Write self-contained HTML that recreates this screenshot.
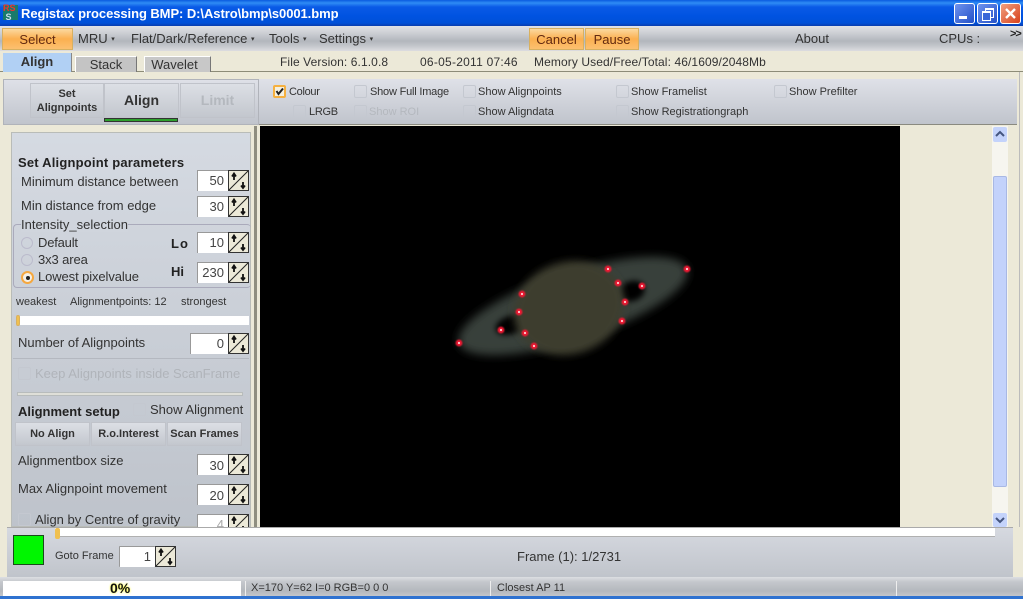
<!DOCTYPE html>
<html><head><meta charset="utf-8"><style>
html,body{margin:0;padding:0}
body{width:1023px;height:599px;position:relative;overflow:hidden;background:#ece9d8;font-family:"Liberation Sans",sans-serif;font-size:12px;color:#333}
.a,.t{position:absolute}
.t{white-space:nowrap;line-height:14px}
.b{font-weight:bold;color:#222}
.box{position:absolute;background:#fff;border-top:1px solid #999;border-left:1px solid #999;box-sizing:border-box;text-align:right;padding-right:4px;font-size:13px;line-height:20px;color:#444}
.sp{position:absolute;width:21px;height:21px;background:#ece9d8;border:1px solid #333;box-sizing:border-box}
.sp svg{position:absolute;left:0;top:0}
.cb{position:absolute;width:13px;height:13px;border:1px solid #c4c8d0;border-radius:2px;box-sizing:border-box;background:none}
.btn{position:absolute;background:linear-gradient(#dcdfe5,#c3c7ce);border:1px solid #c0c3ca;box-sizing:border-box;text-align:center;font-weight:bold;color:#333}
.or{position:absolute;background:linear-gradient(#fbd9a0,#fbb050 50%,#fcc070);border:1px solid #d8b060;box-sizing:border-box;text-align:center;font-size:13px;line-height:21px;color:#632a10}
.tab{position:absolute;box-sizing:border-box;text-align:center;font-size:13px}
.wb{position:absolute;top:3px;width:21px;height:21px;border:1px solid #fff;border-radius:3px;box-sizing:border-box}
</style></head><body>

<!-- title bar -->
<div class="a" style="left:0;top:0;width:1023px;height:26px;background:linear-gradient(#0a5be0 0,#2f8cf5 3px,#0a5ae6 7px,#0053e1 16px,#0050d8 23px,#0a3cae 26px)"></div>
<div class="a" style="left:3px;top:5px;width:15px;height:15px;background:#1a7a6a"></div>
<div class="t" style="left:3px;top:4px;font-size:9px;color:#e33;font-weight:bold;line-height:9px">R<span style="color:#e33">S</span><br><span style="color:#cde">&nbsp;S</span></div>
<div class="t" style="left:21px;top:6px;font-size:13px;font-weight:bold;color:#fff;letter-spacing:-.07px;line-height:15px">Registax processing BMP: D:\Astro\bmp\s0001.bmp</div>
<div class="wb" style="left:954px;background:linear-gradient(135deg,#6f93ee,#2350c8)"><div class="a" style="left:4px;top:12px;width:8px;height:3px;background:#fff"></div></div>
<div class="wb" style="left:977px;background:linear-gradient(135deg,#6f93ee,#2350c8)"><div class="a" style="left:7px;top:4px;width:7px;height:7px;border:1px solid #fff;border-top-width:2px"></div><div class="a" style="left:4px;top:7px;width:7px;height:7px;border:1px solid #fff;border-top-width:2px;background:#3a66d8"></div></div>
<div class="wb" style="left:1000px;background:linear-gradient(135deg,#f0a080,#d8401c)"><svg width="19" height="19" style="position:absolute;left:0;top:0"><path d="M5 5L14 14M14 5L5 14" stroke="#fff" stroke-width="2.400"/></svg></div>

<!-- menu bar -->
<div class="a" style="left:0;top:26px;width:1023px;height:25px;background:linear-gradient(#e2e2e6 0,#c9ccd1 8px,#b2b6bc 15px,#c4c7cc 20px,#dcdce0 25px)"></div>
<div class="or" style="left:2px;top:28px;width:71px;height:22px;line-height:22px">Select</div>
<div class="t" style="left:78px;top:32px;font-size:13px">MRU <span style="font-size:7px;vertical-align:2px">▾</span></div>
<div class="t" style="left:131px;top:32px;font-size:13px">Flat/Dark/Reference <span style="font-size:7px;vertical-align:2px">▾</span></div>
<div class="t" style="left:269px;top:32px;font-size:13px">Tools <span style="font-size:7px;vertical-align:2px">▾</span></div>
<div class="t" style="left:319px;top:32px;font-size:13px">Settings <span style="font-size:7px;vertical-align:2px">▾</span></div>
<div class="or" style="left:529px;top:28px;width:55px;height:22px">Cancel</div>
<div class="or" style="left:585px;top:28px;width:54px;height:22px">Pause</div>
<div class="t" style="left:795px;top:32px;font-size:13px">About</div>
<div class="t" style="left:939px;top:32px;font-size:13px">CPUs :</div>
<div class="t" style="left:1010px;top:27px;font-size:11px;font-weight:bold;color:#222;letter-spacing:-1px">&gt;&gt;</div>

<!-- tabs -->
<div class="a" style="left:0;top:71px;width:1023px;height:1px;background:#8d8c78"></div>
<div class="tab" style="left:3px;top:53px;width:69px;height:19px;background:#b1d0f4;font-weight:bold;line-height:18px;color:#333;border-right:1px solid #888">Align</div>
<div class="tab" style="left:75px;top:56px;width:62px;height:16px;background:#c4c4c4;line-height:16px;border:1px solid #fff;border-right:1px solid #777;border-bottom:0">Stack</div>
<div class="tab" style="left:144px;top:56px;width:67px;height:16px;background:#c8c8c8;line-height:16px;border:1px solid #fff;border-right:1px solid #777;border-bottom:0;padding-right:6px">Wavelet</div>
<div class="t" style="left:280px;top:55px;letter-spacing:.1px">File Version: 6.1.0.8</div>
<div class="t" style="left:420px;top:55px;letter-spacing:.25px">06-05-2011 07:46</div>
<div class="t" style="left:534px;top:55px;letter-spacing:.1px">Memory Used/Free/Total: 46/1609/2048Mb</div>

<!-- toolbar -->
<div class="a" style="left:3px;top:79px;width:1014px;height:46px;background:linear-gradient(#dfe1e8,#c0c4cc);border-bottom:1px solid #8a8a80;box-sizing:border-box"></div>
<div class="a" style="left:3px;top:79px;width:256px;height:46px;border:1px solid #b0b3ba;box-sizing:border-box"></div>
<div class="a" style="left:1019px;top:72px;width:1px;height:455px;background:#bbb"></div>
<div class="btn" style="left:30px;top:83px;width:74px;height:35px;font-size:11px;line-height:14px;padding-top:3px">Set<br>Alignpoints</div>
<div class="btn" style="left:104px;top:83px;width:75px;height:35px;font-size:14px;line-height:33px">Align</div>
<div class="a" style="left:104px;top:118px;width:74px;height:4px;background:#2da02d;border:1px solid #333;box-sizing:border-box"></div>
<div class="btn" style="left:180px;top:83px;width:75px;height:35px;font-size:14px;line-height:33px;color:#b4b8be">Limit</div>

<div class="a" style="left:273px;top:85px;width:13px;height:13px;background:#f4f0e0;border:2px solid #f5b040;box-sizing:border-box;border-radius:2px"><svg width="9" height="9" style="position:absolute;left:0;top:0"><path d="M1.500 4L3.500 7L8 1.500" stroke="#222" stroke-width="2" fill="none"/></svg></div>
<div class="t" style="left:289px;top:85px;font-size:11px;letter-spacing:-.3px">Colour</div>
<div class="cb" style="left:293px;top:105px"></div><div class="t" style="left:309px;top:105px;font-size:11px;letter-spacing:-.3px">LRGB</div>
<div class="cb" style="left:354px;top:85px"></div><div class="t" style="left:370px;top:85px;font-size:11px;letter-spacing:-.2px">Show Full Image</div>
<div class="cb" style="left:354px;top:105px"></div><div class="t" style="left:369px;top:105px;font-size:11px;color:#b4b8be">Show ROI</div>
<div class="cb" style="left:463px;top:85px"></div><div class="t" style="left:478px;top:85px;font-size:11px">Show Alignpoints</div>
<div class="cb" style="left:463px;top:105px"></div><div class="t" style="left:478px;top:105px;font-size:11px">Show Aligndata</div>
<div class="cb" style="left:616px;top:85px"></div><div class="t" style="left:631px;top:85px;font-size:11px">Show Framelist</div>
<div class="cb" style="left:616px;top:105px"></div><div class="t" style="left:631px;top:105px;font-size:11px">Show Registrationgraph</div>
<div class="cb" style="left:774px;top:85px"></div><div class="t" style="left:789px;top:85px;font-size:11px">Show Prefilter</div>

<!-- left panel -->
<div class="a" style="left:11px;top:132px;width:240px;height:395px;background:linear-gradient(#d5dae2,#bec3cb);border:1px solid #b9bcb8;box-sizing:border-box"></div>
<div class="a" style="left:254px;top:126px;width:3px;height:401px;background:#8f8e80"></div>
<div class="t b" style="left:18px;top:156px;font-size:13px;letter-spacing:.2px">Set Alignpoint parameters</div>
<div class="t" style="left:21px;top:175px;font-size:13px">Minimum distance between</div>
<div class="t" style="left:21px;top:199px;font-size:13px">Min distance from edge</div>

<div class="a" style="left:13px;top:224px;width:238px;height:64px;border:1px solid #aab;border-right:0;border-radius:4px;box-sizing:border-box"></div>
<div class="t" style="left:21px;top:218px;font-size:13px;background:#d0d5dd">Intensity_selection</div>
<div class="a" style="left:21px;top:237px;width:12px;height:12px;border-radius:50%;border:1px solid #bbc;box-sizing:border-box"></div>
<div class="t" style="left:38px;top:236px;font-size:13px;letter-spacing:-.2px">Default</div>
<div class="a" style="left:21px;top:254px;width:12px;height:12px;border-radius:50%;border:1px solid #bbc;box-sizing:border-box"></div>
<div class="t" style="left:38px;top:253px;font-size:13px;letter-spacing:-.1px">3x3 area</div>
<div class="a" style="left:21px;top:271px;width:13px;height:13px;border-radius:50%;border:2px solid #f5a840;background:#f4f0e8;box-sizing:border-box"><div class="a" style="left:2.500px;top:2.500px;width:4px;height:4px;border-radius:50%;background:#222"></div></div>
<div class="t" style="left:38px;top:270px;font-size:13px;letter-spacing:-.1px">Lowest pixelvalue</div>
<div class="t b" style="left:171px;top:237px;font-size:13px;letter-spacing:1px">Lo</div>
<div class="t b" style="left:171px;top:265px;font-size:13px">Hi</div>

<div class="t" style="left:16px;top:295px;font-size:11px">weakest</div>
<div class="t" style="left:70px;top:295px;font-size:11px">Alignmentpoints: 12</div>
<div class="t" style="left:181px;top:295px;font-size:11px">strongest</div>
<div class="a" style="left:16px;top:316px;width:233px;height:9px;background:#fff"></div>
<div class="a" style="left:16px;top:315px;width:4px;height:11px;background:#f0c050;border-radius:2px;border:1px solid #d8b060;box-sizing:border-box"></div>

<div class="t" style="left:18px;top:336px;font-size:13px">Number of Alignpoints</div>
<div class="a" style="left:13px;top:358px;width:236px;height:1px;background:#b4b8c0"></div>
<div class="cb" style="left:18px;top:367px"></div>
<div class="t" style="left:35px;top:367px;font-size:13px;color:#b0b4ba">Keep Alignpoints inside ScanFrame</div>
<div class="a" style="left:17px;top:392px;width:226px;height:4px;background:#dfdfd8;border:1px solid #b8bcbc;box-sizing:border-box"></div>
<div class="t b" style="left:18px;top:405px;font-size:13px">Alignment setup</div>
<div class="cb" style="left:133px;top:403px"></div>
<div class="t" style="left:150px;top:403px;font-size:13px">Show Alignment</div>
<div class="btn" style="left:15px;top:422px;width:75px;height:24px;font-size:11px;line-height:22px">No Align</div>
<div class="btn" style="left:91px;top:422px;width:75px;height:24px;font-size:11px;line-height:22px">R.o.Interest</div>
<div class="btn" style="left:167px;top:422px;width:75px;height:24px;font-size:11px;line-height:22px">Scan Frames</div>
<div class="t" style="left:18px;top:454px;font-size:13px">Alignmentbox size</div>
<div class="t" style="left:18px;top:482px;font-size:13px">Max Alignpoint movement</div>
<div class="cb" style="left:18px;top:513px"></div>
<div class="t" style="left:35px;top:513px;font-size:13px">Align by Centre of gravity</div>

<!-- spin boxes -->
<svg width="0" height="0" style="position:absolute"><symbol id="s" viewBox="0 0 19 19"><path d="M0 19L19 0" stroke="#222" stroke-width="1"/><path d="M5 9V4M3 5.500L5 2.500L7 5.500" stroke="#111" stroke-width="1.800" fill="none"/><path d="M14 11V16M12 14.500L14 17L16 14.500" stroke="#111" stroke-width="1.800" fill="none"/></symbol></svg>
<div class="box" style="left:197px;top:170px;width:31px;height:21px">50</div><div class="sp" style="left:228px;top:170px"><svg width="19" height="19"><use href="#s"/></svg></div>
<div class="box" style="left:197px;top:196px;width:31px;height:21px">30</div><div class="sp" style="left:228px;top:196px"><svg width="19" height="19"><use href="#s"/></svg></div>
<div class="box" style="left:197px;top:232px;width:31px;height:21px">10</div><div class="sp" style="left:228px;top:232px"><svg width="19" height="19"><use href="#s"/></svg></div>
<div class="box" style="left:197px;top:262px;width:31px;height:21px">230</div><div class="sp" style="left:228px;top:262px"><svg width="19" height="19"><use href="#s"/></svg></div>
<div class="box" style="left:190px;top:333px;width:38px;height:21px">0</div><div class="sp" style="left:228px;top:333px"><svg width="19" height="19"><use href="#s"/></svg></div>
<div class="box" style="left:197px;top:454px;width:31px;height:21px;line-height:21px">30</div><div class="sp" style="left:228px;top:454px"><svg width="19" height="19"><use href="#s"/></svg></div>
<div class="box" style="left:197px;top:484px;width:31px;height:21px;line-height:21px">20</div><div class="sp" style="left:228px;top:484px"><svg width="19" height="19"><use href="#s"/></svg></div>
<div class="box" style="left:197px;top:514px;width:31px;height:21px;color:#aaa">4</div><div class="sp" style="left:228px;top:514px"><svg width="19" height="19"><use href="#s"/></svg></div>

<!-- image -->
<div class="a" style="left:260px;top:126px;width:640px;height:401px;background:#000;overflow:hidden">
<svg width="640" height="401" viewBox="260 126 640 401" style="position:absolute;left:0;top:0">
<defs>
<filter id="f" x="-20%" y="-50%" width="140%" height="200%"><feGaussianBlur stdDeviation="4.500"/></filter>
<filter id="g" x="-30%" y="-30%" width="160%" height="160%"><feGaussianBlur stdDeviation="4"/></filter>
<filter id="k" x="-50%" y="-50%" width="200%" height="200%"><feGaussianBlur stdDeviation="3"/></filter>
<filter id="h" x="-100%" y="-100%" width="300%" height="300%"><feGaussianBlur stdDeviation=".8"/></filter>
</defs>
<ellipse cx="573" cy="306" rx="120" ry="34" transform="rotate(-18 573 306)" fill="#393f3a" filter="url(#f)"/>
<ellipse cx="511" cy="325" rx="16" ry="9" transform="rotate(-18 511 325)" fill="#030303" filter="url(#k)"/>
<ellipse cx="632" cy="291" rx="13" ry="10" transform="rotate(-18 632 291)" fill="#030303" filter="url(#k)"/>
<ellipse cx="569" cy="308" rx="56" ry="46" transform="rotate(-18 569 308)" fill="#3c3d2e" filter="url(#g)"/>
<g filter="url(#h)" fill="#f01830">
<circle cx="608" cy="269" r="3.400"/><circle cx="687" cy="269" r="3.400"/><circle cx="618" cy="283" r="3.400"/><circle cx="642" cy="286" r="3.400"/><circle cx="625" cy="302" r="3.400"/><circle cx="622" cy="321" r="3.400"/><circle cx="522" cy="294" r="3.400"/><circle cx="519" cy="312" r="3.400"/><circle cx="501" cy="330" r="3.400"/><circle cx="525" cy="333" r="3.400"/><circle cx="534" cy="346" r="3.400"/><circle cx="459" cy="343" r="3.400"/>
</g>
<g fill="#ffd0d0">
<circle cx="608" cy="269" r="1.100"/><circle cx="687" cy="269" r="1.100"/><circle cx="618" cy="283" r="1.100"/><circle cx="642" cy="286" r="1.100"/><circle cx="625" cy="302" r="1.100"/><circle cx="622" cy="321" r="1.100"/><circle cx="522" cy="294" r="1.100"/><circle cx="519" cy="312" r="1.100"/><circle cx="501" cy="330" r="1.100"/><circle cx="525" cy="333" r="1.100"/><circle cx="534" cy="346" r="1.100"/><circle cx="459" cy="343" r="1.100"/>
</g>
</svg></div>

<!-- scrollbar -->
<div class="a" style="left:992px;top:126px;width:16px;height:401px;background:#f6f5ef"></div>
<div class="a" style="left:993px;top:176px;width:14px;height:311px;background:#c3d2fb;border:1px solid #a8b8e4;box-sizing:border-box;border-radius:2px"></div>
<div class="a" style="left:993px;top:127px;width:14px;height:15px;background:#c4d3fb;border-radius:2px"><svg width="14" height="15"><path d="M3 9L7 5L11 9" stroke="#44557f" stroke-width="2" fill="none"/></svg></div>
<div class="a" style="left:993px;top:513px;width:14px;height:14px;background:#c4d3fb;border-radius:2px"><svg width="14" height="14"><path d="M3 5L7 9L11 5" stroke="#44557f" stroke-width="2" fill="none"/></svg></div>

<!-- bottom panel -->
<div class="a" style="left:7px;top:527px;width:1006px;height:50px;background:linear-gradient(#d6d9e0,#c0c4cb);border-top:1px solid #aaa;box-sizing:border-box"></div>
<div class="a" style="left:55px;top:528px;width:940px;height:8px;background:#fff;border-bottom:1px solid #b0b0b0"></div>
<div class="a" style="left:55px;top:528px;width:5px;height:11px;background:#f0c050;border-radius:2px"></div>
<div class="a" style="left:13px;top:535px;width:31px;height:30px;background:#00f600;border:1px solid #1a4a1a;box-sizing:border-box"></div>
<div class="t" style="left:55px;top:549px;font-size:11px">Goto Frame</div>
<div class="box" style="left:119px;top:546px;width:36px;height:21px;border-radius:1px">1</div>
<div class="sp" style="left:155px;top:546px"><svg width="19" height="19"><use href="#s"/></svg></div>
<div class="t" style="left:517px;top:550px;font-size:13px">Frame (1): 1/2731</div>

<!-- status bar -->
<div class="a" style="left:0;top:577px;width:1023px;height:19px;background:linear-gradient(#dcdee2 0,#c4c7cc 5px,#b4b8bd 14px,#c4c6ca 19px)"></div>
<div class="a" style="left:3px;top:581px;width:238px;height:15px;background:#fff"></div>
<div class="t" style="left:110px;top:581px;font-size:14px;font-weight:bold;color:#111;text-shadow:0 0 2px #ff0">0%</div>
<div class="a" style="left:245px;top:581px;width:1px;height:15px;background:#eee"></div>
<div class="a" style="left:490px;top:581px;width:1px;height:15px;background:#eee"></div>
<div class="a" style="left:896px;top:581px;width:1px;height:15px;background:#eee"></div>
<div class="t" style="left:251px;top:581px;font-size:11px">X=170 Y=62 I=0 RGB=0 0 0</div>
<div class="t" style="left:497px;top:581px;font-size:11px">Closest AP 11</div>
<div class="a" style="left:0;top:596px;width:1023px;height:3px;background:#2f72d0"></div>
</body></html>
